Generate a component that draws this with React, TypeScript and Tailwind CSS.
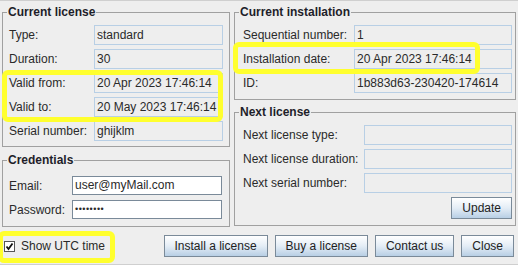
import React from 'react';

type Row = { label: string; value?: string };

function Group({ title, className, children }: { title: string; className?: string; children: React.ReactNode }) {
  return (
    <div className={`relative pt-[7px] ${className ?? ''}`}>
      <div className="border border-[#a0a0a0]">{children}</div>
      <span className="absolute left-[5px] top-0 bg-[#eeeeee] px-[1px] text-[12px] leading-[14px] font-bold text-[#1e1e2a]">
        {title}
      </span>
    </div>
  );
}

function ReadField({ value, width }: { value?: string; width: string }) {
  return (
    <div className={`${width} h-[20px] border border-[#b8cfe5] pl-[2px] text-[12px] leading-[18px] whitespace-nowrap overflow-hidden`}>
      {value}
    </div>
  );
}

function Rows({ rows, labelW, fieldW }: { rows: Row[]; labelW: string; fieldW: string }) {
  return (
    <div className="flex flex-col gap-[4px]">
      {rows.map((r) => (
        <div key={r.label} className="flex items-center">
          <div className={`${labelW} text-[12px] leading-[14px] whitespace-nowrap`}>{r.label}</div>
          <ReadField value={r.value} width={fieldW} />
        </div>
      ))}
    </div>
  );
}

function SwingButton({ children }: { children: React.ReactNode }) {
  return (
    <button className="h-[22px] px-[10px] border border-[#7a8a99] bg-linear-to-b from-white via-[#e4edf6] to-[#b8cfe5] text-[12px] leading-[18px] text-[#222] whitespace-nowrap">
      {children}
    </button>
  );
}

export default function App() {
  const license: Row[] = [
    { label: 'Type:', value: 'standard' },
    { label: 'Duration:', value: '30' },
    { label: 'Valid from:', value: '20 Apr 2023 17:46:14' },
    { label: 'Valid to:', value: '20 May 2023 17:46:14' },
    { label: 'Serial number:', value: 'ghijklm' },
  ];
  const install: Row[] = [
    { label: 'Sequential number:', value: '1' },
    { label: 'Installation date:', value: '20 Apr 2023 17:46:14' },
    { label: 'ID:', value: '1b883d63-230420-174614' },
  ];
  const next: Row[] = [
    { label: 'Next license type:' },
    { label: 'Next license duration:' },
    { label: 'Next serial number:' },
  ];

  return (
    <div
      className="relative w-[518px] h-[265px] overflow-hidden bg-[#eeeeee] border-t border-b border-[#cfcfcf] text-[#2a2a2a]"
      style={{ fontFamily: '"Liberation Sans", Arial, sans-serif' }}
    >
      <div className="flex px-[2px] pt-[4px] gap-[4px]">
        {/* left column */}
        <div className="w-[228px] flex flex-col">
          <Group title="Current license">
            <div className="pl-[6px] pr-[6px] pt-[12px] pb-[5px]">
              <Rows rows={license} labelW="w-[85px]" fieldW="w-[129px]" />
            </div>
          </Group>
          <Group title="Credentials" className="mt-[6px]">
            <div className="pl-[6px] pr-[7px] pt-[15px] pb-[7px] flex flex-col gap-[5px]">
              <div className="flex items-center">
                <div className="w-[63px] text-[12px] leading-[14px]">Email:</div>
                <div className="w-[150px] h-[19px] border border-[#7a8a99] bg-white pl-[2px] text-[12px] leading-[17px]">
                  user@myMail.com
                </div>
              </div>
              <div className="flex items-center">
                <div className="w-[63px] text-[12px] leading-[14px]">Password:</div>
                <div className="w-[150px] h-[19px] border border-[#7a8a99] bg-white pl-[2px] text-[9px] leading-[17px] tracking-[0.5px]">
                  ••••••••
                </div>
              </div>
            </div>
          </Group>
        </div>

        {/* right column */}
        <div className="w-[282px] flex flex-col">
          <Group title="Current installation">
            <div className="pl-[8px] pr-[3px] pt-[12px] pb-[6px]">
              <Rows rows={install} labelW="w-[111px]" fieldW="w-[158px]" />
            </div>
          </Group>
          <Group title="Next license" className="mt-[5px]">
            <div className="pl-[8px] pr-[3px] pt-[12px] pb-[6px] flex flex-col">
              <Rows rows={next} labelW="w-[121px]" fieldW="w-[148px]" />
              <div className="flex justify-end mt-[4px]">
                <SwingButton>Update</SwingButton>
              </div>
            </div>
          </Group>
        </div>
      </div>

      {/* bottom bar */}
      <div className="flex items-center justify-between mt-[8px] pl-[4px] pr-[4px]">
        <label className="flex items-center gap-[6px] text-[12px] leading-[14px]">
          <span className="w-[11px] h-[11px] border border-[#555] bg-white flex items-center justify-center">
            <svg width="9" height="9" viewBox="0 0 9 9">
              <path d="M1.5 4.5 L3.5 7 L7.5 1.5" stroke="#111" strokeWidth="1.8" fill="none" />
            </svg>
          </span>
          Show UTC time
        </label>
        <div className="flex gap-[7px]">
          <SwingButton>Install a license</SwingButton>
          <SwingButton>Buy a license</SwingButton>
          <SwingButton>Contact us</SwingButton>
          <SwingButton>Close</SwingButton>
        </div>
      </div>

      {/* yellow annotation highlights */}
      <div className="pointer-events-none absolute left-[2px] top-[69px] w-[221px] h-[52px] rounded-[6px] border-[5px] border-[#ffff2e]" />
      <div className="pointer-events-none absolute left-[233px] top-[41px] w-[247px] h-[32px] rounded-[6px] border-[5px] border-[#ffff2e]" />
      <div className="pointer-events-none absolute left-[-2px] top-[230px] w-[117px] h-[32px] rounded-[6px] border-[5px] border-[#ffff2e]" />
    </div>
  );
}
